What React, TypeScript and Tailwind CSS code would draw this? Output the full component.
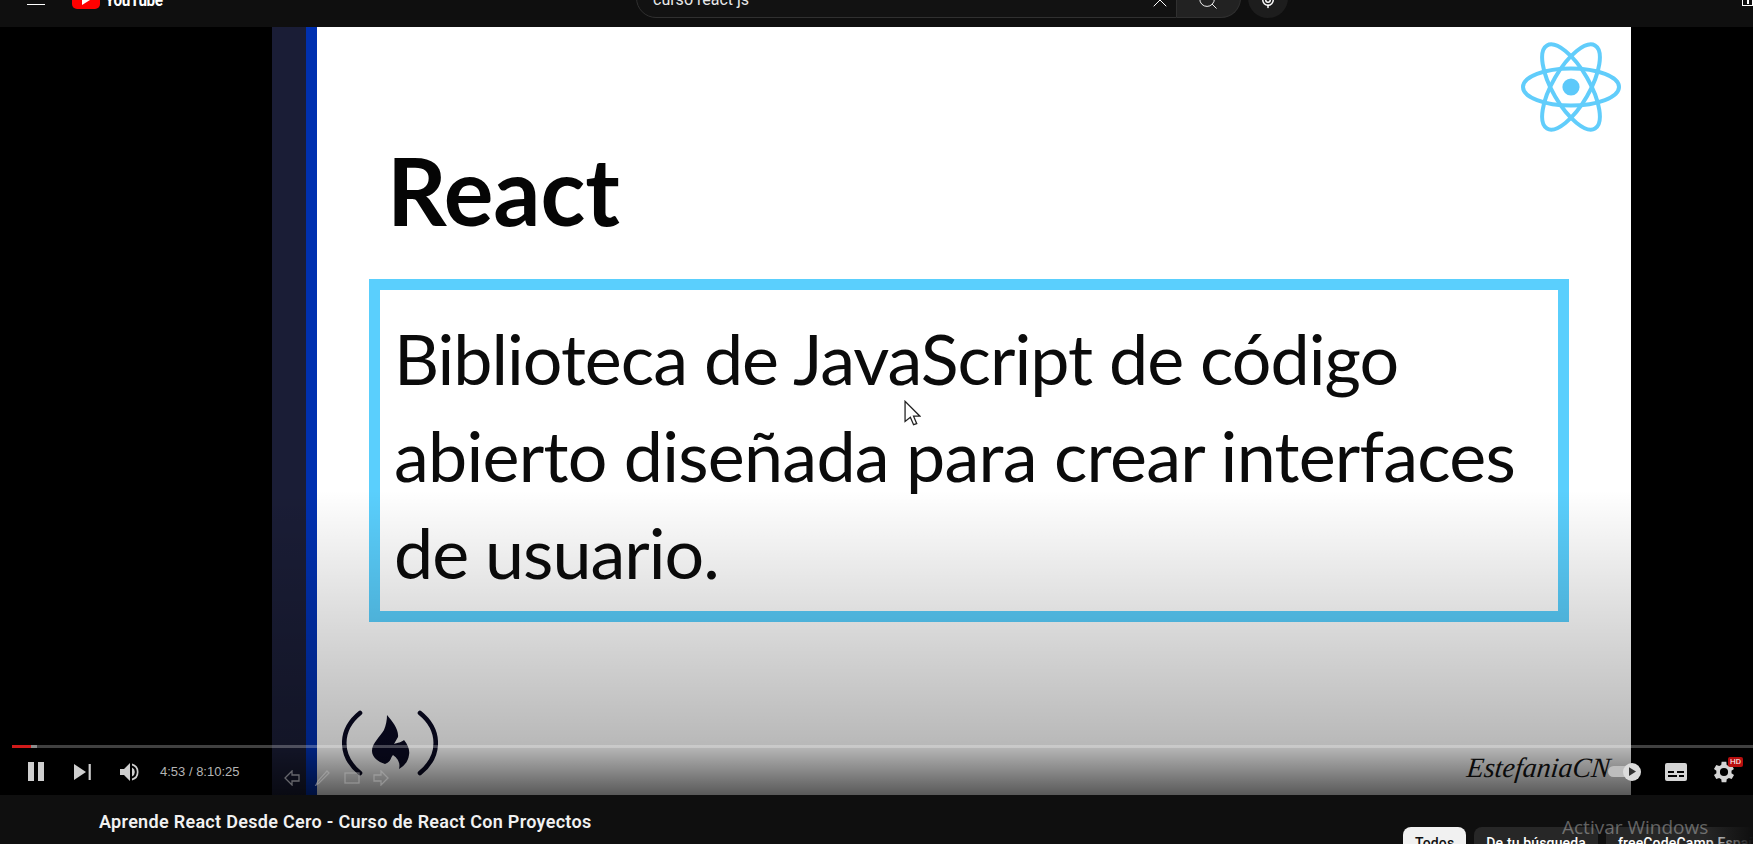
import { Search, X, Mic } from "lucide-react";

function ReactLogo() {
  return (
    <svg viewBox="0 0 100 90" className="h-[90px] w-[100px]" fill="none" stroke="#61cdfb" strokeWidth="4">
      <circle cx="50" cy="45" r="8.6" fill="#5cc9fa" stroke="none" />
      <ellipse cx="50" cy="45" rx="48" ry="18.5" />
      <ellipse cx="50" cy="45" rx="48" ry="18.5" transform="rotate(60 50 45)" />
      <ellipse cx="50" cy="45" rx="48" ry="18.5" transform="rotate(120 50 45)" />
    </svg>
  );
}

function FccLogo() {
  return (
    <svg viewBox="0 0 96 66" className="h-[66px] w-[96px]" fill="#0a0a23">
      <path d="M18 3C-3 20-3 46 18 63" fill="none" stroke="#0a0a23" strokeWidth="4.6" strokeLinecap="round" />
      <path d="M78 3C99 20 99 46 78 63" fill="none" stroke="#0a0a23" strokeWidth="4.6" strokeLinecap="round" />
      <path d="M45 5C50 11 57 19 56 27L52 34C55 33 60 32 62 30C66 35 68 40 67 45C66 52 62 56 57 59C59 52 54 47 51 45C48 48 50 51 43 54C36 52 30 47 30 41C30 33 38 27 42 20C44 15 45 10 45 5Z" />
    </svg>
  );
}

function Controls() {
  return (
    <div className="absolute inset-x-0 bottom-0 h-[50px]">
      <div className="ml-3 flex h-[3px] bg-white/25">
        <div className="w-[19px] bg-[#d01a1a]" />
        <div className="w-[6px] bg-white/40" />
      </div>
      <div className="flex h-[47px] items-center justify-between pr-[15px] text-[#cfcfcf]">
        <div className="flex items-center">
          <svg viewBox="0 0 16 19" className="ml-[28px] h-[19px] w-[16px]" fill="currentColor">
            <rect x="0" y="0" width="6" height="19" />
            <rect x="10" y="0" width="6" height="19" />
          </svg>
          <svg viewBox="0 0 17 16" className="ml-[30px] h-[16px] w-[17px]" fill="currentColor">
            <path d="M0 0l12 8-12 8z" />
            <rect x="14.6" y="0" width="2.2" height="16" />
          </svg>
          <svg viewBox="0 0 19 18" className="ml-[29px] h-[18px] w-[19px]" fill="currentColor">
            <path d="M0 6h4l6-6v18l-6-6H0z" />
            <path d="M12 4.5a5 5 0 0 1 0 9z" />
            <path d="M12 0.5v2a6.8 6.8 0 0 1 0 13v2a8.8 8.8 0 0 0 0-17z" />
          </svg>
          <span className="ml-[21px] font-['Liberation_Sans',sans-serif] text-[13px] text-[#b5b5b5]">
            4:53 / 8:10:25
          </span>
          <svg viewBox="0 0 105 16" className="ml-[44px] h-[16px] w-[105px] translate-y-[6px]" fill="none" stroke="#b0b0b0" strokeOpacity="0.55" strokeWidth="1.3">
            <path d="M8 1L1 8l7 7v-4h7V5H8z" />
            <path d="M32 15l2-4 9-10 2 2-10 10z" />
            <rect x="61" y="3" width="14" height="10" />
            <path d="M97 1l7 7-7 7v-4h-7V5h7z" />
          </svg>
        </div>
        <div className="flex items-center">
          <div className="relative mr-[30px] h-[11px] w-[27px] rounded-full bg-[#bdbdbd]">
            <div className="absolute -right-[6px] -top-[3.5px] flex h-[18px] w-[18px] items-center justify-center rounded-full bg-[#dcdcdc]">
              <svg viewBox="0 0 8 10" className="h-[9px] w-[7px]" fill="#333">
                <path d="M0 0l8 5-8 5z" />
              </svg>
            </div>
          </div>
          <svg viewBox="0 0 22 18" className="h-[18px] w-[22px]" fill="#d4d4d4">
            <path fillRule="evenodd" d="M2 0h18a2 2 0 0 1 2 2v14a2 2 0 0 1-2 2H2a2 2 0 0 1-2-2V2a2 2 0 0 1 2-2zm1 8v2h6V8zm9 0v2h7V8zM3 12v2h9v-2zm11 0v2h5v-2z" />
          </svg>
          <div className="relative ml-[23px]">
            <svg viewBox="1 0 24 24" className="h-[28px] w-[28px]" fill="#d4d4d4">
              <path d="M19.4 13a7.5 7.5 0 0 0 0-2l2.1-1.6-2-3.5-2.5 1a7.6 7.6 0 0 0-1.7-1L15 3.3h-4l-.4 2.6a7.6 7.6 0 0 0-1.7 1l-2.5-1-2 3.5L6.5 11a7.5 7.5 0 0 0 0 2l-2.1 1.6 2 3.5 2.5-1a7.6 7.6 0 0 0 1.7 1l.4 2.6h4l.4-2.6a7.6 7.6 0 0 0 1.7-1l2.5 1 2-3.5zM13 15.5a3.5 3.5 0 1 1 0-7 3.5 3.5 0 0 1 0 7z" />
            </svg>
            <span className="absolute -right-[5px] -top-[1px] rounded-[2px] bg-[#b80f0f] px-[2px] font-['Roboto',sans-serif] text-[8px] leading-[10px] text-white">
              HD
            </span>
          </div>
        </div>
      </div>
    </div>
  );
}

function Slide() {
  return (
    <div className="flex h-full w-[1359px] shrink-0 bg-white">
      <div className="w-[34px] bg-[#1a1d36]" />
      <div className="w-[11px] bg-[#0030b0]" />
      <div className="relative flex-1 pl-[52px] font-['Lato',sans-serif] text-[#0b0b0b]">
        <div className="absolute right-[10px] top-[15px]">
          <ReactLogo />
        </div>
        <h1 className="ml-[18px] pt-[113px] text-[93px] font-bold leading-[100px] text-[#050505]">React</h1>
        <div className="mt-[39px] h-[343px] w-[1200px] border-[11px] border-[#5acffd] pl-[14px] pt-[20px] text-[70px] leading-[97px] tracking-[-1px]">
          <p>Biblioteca de JavaScript de código</p>
          <p className="tracking-[-0.75px]">abierto diseñada para crear interfaces</p>
          <p>de usuario.</p>
        </div>
        <div className="absolute bottom-[19px] left-[25px]">
          <FccLogo />
        </div>
        <span className="absolute bottom-[11px] right-[21px] -skew-x-6 font-['Liberation_Serif',serif] text-[28px] italic leading-[32px] text-[#141414]">
          EstefaniaCN
        </span>
      </div>
    </div>
  );
}

export default function App() {
  return (
    <div className="flex h-[844px] w-[1753px] flex-col overflow-hidden bg-[#0f0f0f] font-['Roboto',sans-serif] text-white">
      <header className="h-[27px] shrink-0 overflow-hidden">
        <div className="-mt-[22px] flex h-[40px] items-start">
          <div className="ml-[27px] mt-[26px] h-px w-[18px] bg-white" />
          <div className="ml-[27px] mt-[13px] flex w-[90px] items-center gap-[5px]">
            <div className="flex h-[18px] w-[28px] shrink-0 items-center justify-center rounded-[5px] bg-[#f00]">
              <svg viewBox="0 0 8 10" className="h-[10px] w-[8px]" fill="#fff">
                <path d="M0 0l8 5-8 5z" />
              </svg>
            </div>
            <span className="origin-left scale-x-85 text-[18px] font-bold leading-[18px] tracking-[-0.5px]">YouTube</span>
          </div>
          <div className="ml-[474px] flex h-[40px] w-[541px] items-center justify-between rounded-l-full border border-[#303030] bg-[#121212] pl-[16px] pr-[4px] pt-[4px]">
            <span className="text-[16px] text-[#e8e8e8]">curso react js</span>
            <X size={24} strokeWidth={1} />
          </div>
          <div className="flex h-[40px] w-[64px] items-center justify-center rounded-r-full border border-l-0 border-[#303030] bg-[#222] pr-[2px] pt-[4px]">
            <Search size={22} strokeWidth={1} />
          </div>
          <div className="ml-[7px] flex h-[40px] w-[40px] items-center justify-center rounded-full bg-[#1d1d1d] pt-[4px]">
            <Mic size={18} />
          </div>
          <div className="ml-auto mt-[14px] flex h-[14px] w-[11px] justify-center border border-white">
            <div className="mt-[6px] h-[5px] w-[2px] bg-white" />
          </div>
        </div>
      </header>

      <main className="relative flex h-[768px] shrink-0 bg-black pl-[272px]">
        <Slide />
        <div className="pointer-events-none absolute inset-x-0 bottom-0 h-[305px] bg-[linear-gradient(to_bottom,transparent_0%,rgba(0,0,0,0.28)_84%,rgba(0,0,0,0.65)_100%)]" />
        <svg viewBox="0 0 16 24" className="absolute left-[904px] top-[373px] h-[26px] w-[17px]" fill="#fff" stroke="#222" strokeWidth="1.2">
          <path d="M1 1v19l5-4 3 7 3-1-3-7h6z" />
        </svg>
        <Controls />
      </main>

      <section className="relative flex-1">
        <h2 className="pl-[99px] pt-[15px] text-[18px] font-semibold leading-[24px] tracking-[0.3px] text-[#f1f1f1]">
          Aprende React Desde Cero - Curso de React Con Proyectos
        </h2>
        <div className="absolute left-[1403px] top-[32px] flex w-[350px] gap-[8px] overflow-hidden text-[14px] font-medium tracking-[0.15px]">
          <span className="shrink-0 rounded-lg bg-[#f1f1f1] px-[12px] py-[6px] text-[#0f0f0f]">Todos</span>
          <span className="shrink-0 rounded-lg bg-[#272727] px-[12px] py-[6px]">De tu búsqueda</span>
          <span className="shrink-0 rounded-lg bg-[#272727] px-[12px] py-[6px]">freeCodeCamp Español</span>
        </div>
        <div className="absolute right-0 top-[32px] h-[17px] w-[50px] bg-gradient-to-r from-transparent to-[#0f0f0f]" />
        <span className="absolute left-[1562px] top-[18px] font-['Open_Sans',sans-serif] text-[19px] text-white/35">
          Activar Windows
        </span>
      </section>
    </div>
  );
}
